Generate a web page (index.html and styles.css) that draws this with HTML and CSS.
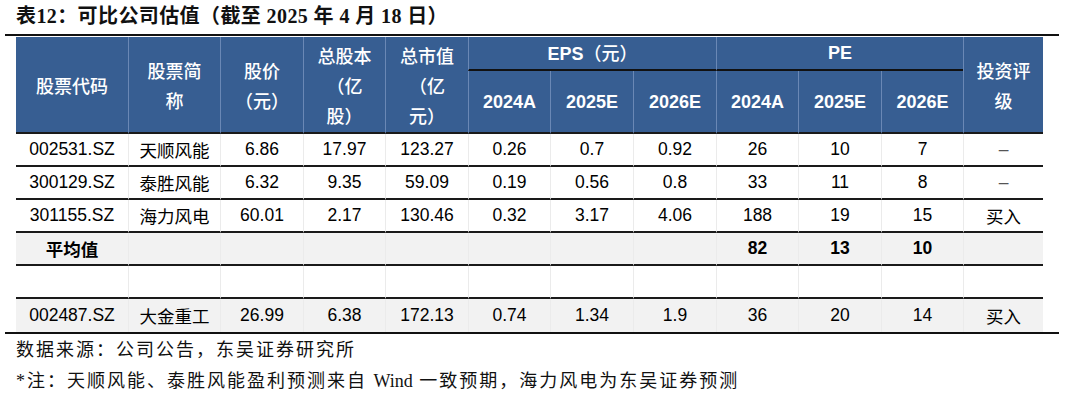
FILE: index.html
```html
<!DOCTYPE html>
<html lang="zh-CN">
<head>
<meta charset="utf-8">
<title>表12 可比公司估值</title>
<link rel="stylesheet" href="styles.css">
</head>
<body>
<div class="page">
  <h1 class="title">表12：可比公司估值（截至 2025 年 4 月 18 日）</h1>
  <div class="rule"></div>
  <table class="val">
    <colgroup>
      <col class="c1"><col class="c2"><col class="c3"><col class="c4"><col class="c5">
      <col class="c6"><col class="c7"><col class="c8"><col class="c9"><col class="c10">
      <col class="c11"><col class="c12">
    </colgroup>
    <thead>
      <tr class="h1">
        <th rowspan="2" class="cjk first">股票代码</th>
        <th rowspan="2" class="cjk">股票简称</th>
        <th rowspan="2" class="cjk">股价（元）</th>
        <th rowspan="2" class="cjk">总股本（亿股）</th>
        <th rowspan="2" class="cjk">总市值（亿元）</th>
        <th colspan="3" class="grp">EPS<span class="cjk">（元）</span></th>
        <th colspan="3" class="grp">PE</th>
        <th rowspan="2" class="cjk">投资评级</th>
      </tr>
      <tr class="h2">
        <th>2024A</th><th>2025E</th><th>2026E</th>
        <th>2024A</th><th>2025E</th><th>2026E</th>
      </tr>
    </thead>
    <tbody>
      <tr>
        <td class="first">002531.SZ</td><td>天顺风能</td><td>6.86</td><td>17.97</td><td>123.27</td>
        <td>0.26</td><td>0.7</td><td>0.92</td><td>26</td><td>10</td><td>7</td><td class="dash">–</td>
      </tr>
      <tr>
        <td class="first">300129.SZ</td><td>泰胜风能</td><td>6.32</td><td>9.35</td><td>59.09</td>
        <td>0.19</td><td>0.56</td><td>0.8</td><td>33</td><td>11</td><td>8</td><td class="dash">–</td>
      </tr>
      <tr>
        <td class="first">301155.SZ</td><td>海力风电</td><td>60.01</td><td>2.17</td><td>130.46</td>
        <td>0.32</td><td>3.17</td><td>4.06</td><td>188</td><td>19</td><td>15</td><td>买入</td>
      </tr>
      <tr class="avg">
        <td class="first">平均值</td><td></td><td></td><td></td><td></td>
        <td></td><td></td><td></td><td>82</td><td>13</td><td>10</td><td></td>
      </tr>
      <tr class="blank">
        <td class="first"></td><td></td><td></td><td></td><td></td>
        <td></td><td></td><td></td><td></td><td></td><td></td><td></td>
      </tr>
      <tr class="last">
        <td class="first">002487.SZ</td><td>大金重工</td><td>26.99</td><td>6.38</td><td>172.13</td>
        <td>0.74</td><td>1.34</td><td>1.9</td><td>36</td><td>20</td><td>14</td><td>买入</td>
      </tr>
    </tbody>
  </table>
  <div class="rule"></div>
  <div class="notes">
    <p>数据来源：公司公告，东吴证券研究所</p>
    <p>*注：天顺风能、泰胜风能盈利预测来自 <span class="latin">Wind</span> 一致预期，海力风电为东吴证券预测</p>
  </div>
</div>
</body>
</html>
```

FILE: styles.css
```css
html, body {
  margin: 0;
  padding: 0;
  background: #ffffff;
}

.page {
  padding-left: 5px;
  width: 1054px;
}

.title {
  margin: 0;
  padding: 0 0 2px 11px;
  height: 32px;
  line-height: 32px;
  font-family: "Liberation Serif", "Noto Sans CJK SC", serif;
  font-size: 20px;
  font-weight: 700;
  letter-spacing: 0.4px;
  color: #111111;
  white-space: nowrap;
}

.rule {
  height: 2px;
  background: #111111;
  width: 1054px;
}

.val {
  margin: 1px 0 0 11px;
  border-collapse: separate;
  border-spacing: 0;
  table-layout: fixed;
  width: 1027px;
  font-family: "Liberation Sans", "Noto Sans CJK SC", sans-serif;
  font-size: 17.5px;
  color: #000000;
}

.c1 { width: 112px; }
.c2 { width: 92px; }
.c3 { width: 83px; }
.c4 { width: 82px; }
.c5 { width: 83px; }
.c6 { width: 82px; }
.c7 { width: 83px; }
.c8 { width: 83px; }
.c9 { width: 82px; }
.c10 { width: 83px; }
.c11 { width: 82px; }
.c12 { width: 80px; }

.val th {
  background: #375e92;
  color: #ffffff;
  font-weight: 700;
  font-size: 18px;
  padding: 0 11px;
  text-align: center;
  vertical-align: middle;
  border-left: 1px solid #6a88b5;
  line-height: 30px;
}

.val th.first {
  border-left: none;
}

.val th.cjk,
.val th .cjk {
  font-family: "Noto Sans CJK SC", sans-serif;
  font-weight: 500;
}

.val thead .h1 {
  height: 34px;
}

.val thead .h2 {
  height: 63px;
}

.val th.grp {
  border-bottom: 2px solid #111111;
  line-height: 28px;
}

.val th[rowspan],
.val .h2 th {
  border-bottom: 2px solid #1a1a1a;
}

.val td {
  height: 31px;
  padding: 0 4px;
  text-align: center;
  vertical-align: middle;
  border-left: 1px solid #ebebeb;
  border-bottom: 2px solid #1a1a1a;
  white-space: nowrap;
}

.val td.first {
  border-left: none;
}

.val tr.avg td {
  background: #f2f2f2;
  font-weight: 700;
}

.val tr.avg td.first {
  font-family: "Noto Sans CJK SC", sans-serif;
}

.val tr.last td {
  background: #f2f2f2;
  border-bottom: none;
  height: 33px;
}

.val td.dash {
  color: #555555;
}

.notes {
  padding-left: 11px;
  padding-top: 1px;
  font-family: "Liberation Serif", "Noto Sans CJK SC", serif;
  font-size: 18px;
  letter-spacing: 2px;
  color: #111111;
}

.notes .latin {
  letter-spacing: 0;
}

.notes p {
  margin: 0;
  line-height: 31px;
  white-space: nowrap;
}
```
